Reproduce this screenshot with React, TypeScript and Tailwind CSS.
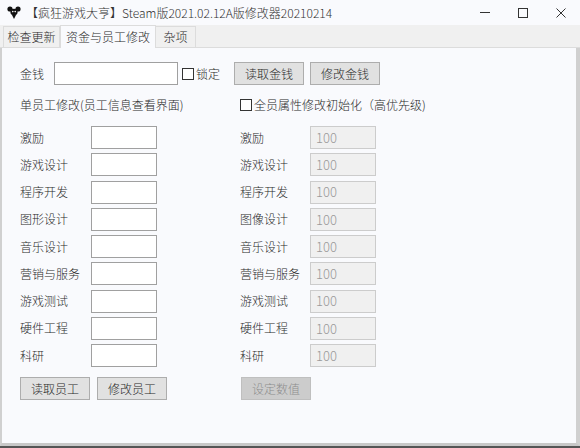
import React from "react";

const font = { fontFamily: '"Noto Sans CJK SC", "Microsoft YaHei", sans-serif' };

const skills = ["激励", "游戏设计", "程序开发", "图形设计", "音乐设计", "营销与服务", "游戏测试", "硬件工程", "科研"];
const skillsRight = ["激励", "游戏设计", "程序开发", "图像设计", "音乐设计", "营销与服务", "游戏测试", "硬件工程", "科研"];

function Btn({ children, disabled }: { children: React.ReactNode; disabled?: boolean }) {
  return (
    <button
      className={
        disabled
          ? "flex h-[23px] w-[70px] items-center justify-center border border-[#bfbfbf] bg-[#cccccc] text-[12px] text-[#8d8d8d]"
          : "flex h-[23px] w-[70px] items-center justify-center border border-[#adadad] bg-[#e1e1e1] text-[12px] text-[#2a2a2a]"
      }
    >
      {children}
    </button>
  );
}

function Check() {
  return <span className="inline-block h-[12px] w-[12px] border border-[#333] bg-white" />;
}

function AppIcon() {
  return (
    <svg width="14" height="13" viewBox="0 0 14 13">
      <circle cx="3" cy="3" r="2.6" fill="#111" />
      <circle cx="11" cy="3" r="2.6" fill="#111" />
      <ellipse cx="7" cy="6" rx="3.6" ry="3.2" fill="#111" />
      <path d="M5 9 L7 13 L9 9 Z" fill="#111" />
      <circle cx="5.8" cy="5.6" r="0.8" fill="#fff" />
      <circle cx="8.2" cy="5.6" r="0.8" fill="#fff" />
    </svg>
  );
}

export default function App() {
  return (
    <div className="flex h-[448px] w-[580px] flex-col overflow-hidden bg-[#f9fafd] font-light text-[#2a2a2a]" style={font}>
      {/* title bar */}
      <div className="flex h-[25px] shrink-0 items-center bg-[#f9fafd]">
        <div className="ml-[7px] mr-[5px] flex items-center">
          <AppIcon />
        </div>
        <span className="text-[12px] text-[#333]">【疯狂游戏大亨】Steam版2021.02.12A版修改器20210214</span>
        <div className="ml-auto flex h-full items-center">
          <div className="flex w-[38px] justify-center">
            <span className="block h-px w-[10px] bg-[#333]" />
          </div>
          <div className="flex w-[38px] justify-center">
            <span className="block h-[10px] w-[10px] border border-[#333]" />
          </div>
          <div className="flex w-[38px] justify-center">
            <svg width="10" height="10" viewBox="0 0 10 10">
              <path d="M0.5 0.5 L9.5 9.5 M9.5 0.5 L0.5 9.5" stroke="#333" strokeWidth="1" />
            </svg>
          </div>
        </div>
      </div>

      {/* tabs */}
      <div className="flex h-[23px] shrink-0 items-end border-b border-[#dcdcdc] bg-[#f0f0f0] pl-[3px]">
        <div className="flex h-[21px] w-[57px] items-center justify-center border border-b-0 border-[#dcdcdc] text-[12px]">检查更新</div>
        <div className="relative top-px flex h-[23px] w-[96px] items-center justify-center border border-b-0 border-[#dcdcdc] bg-[#f9fafd] text-[12px]">
          资金与员工修改
        </div>
        <div className="flex h-[21px] w-[40px] items-center justify-center border border-b-0 border-l-0 border-[#dcdcdc] text-[12px]">杂项</div>
      </div>

      {/* content */}
      <div className="flex flex-1 flex-col border-b-[3px] border-l-[2px] border-r-[4px] border-b-[#c8c8c8] border-l-[#d0d0d0] border-r-[#d0d0d0] pl-[18px] pt-[14px]">
        <div className="flex h-[23px] items-center text-[12px]">
          <span className="w-[34px]">金钱</span>
          <input className="h-[23px] w-[124px] border border-[#a0a0a0] bg-white outline-none" />
          <span className="ml-[4px] flex items-center gap-[2px]">
            <Check />
            <span>锁定</span>
          </span>
          <div className="ml-[14px] flex gap-[6px]">
            <Btn>读取金钱</Btn>
            <Btn>修改金钱</Btn>
          </div>
        </div>

        <div className="mt-[11px] flex h-[18px] items-center text-[12px]">
          <span className="w-[220px]">单员工修改(员工信息查看界面)</span>
          <span className="flex items-center gap-[2px]">
            <Check />
            <span>全员属性修改初始化（高优先级)</span>
          </span>
        </div>

        <div className="mt-[12px] grid grid-cols-[220px_1fr] gap-y-[4.25px] text-[12px]">
          {skills.map((s, i) => (
            <React.Fragment key={s}>
              <div className="flex h-[23px] items-center">
                <span className="w-[71px]">{s}</span>
                <input className="h-[23px] w-[66px] border border-[#a0a0a0] bg-white outline-none" />
              </div>
              <div className="flex h-[23px] items-center">
                <span className="w-[70px]">{skillsRight[i]}</span>
                <div className="flex h-[23px] w-[66px] items-center border border-[#cccccc] bg-[#f0f0f0] pl-[5px] text-[13px] text-[#9a9a9a]">
                  100
                </div>
              </div>
            </React.Fragment>
          ))}
        </div>

        <div className="mt-[10px] flex text-[12px]">
          <div className="flex gap-[7px]">
            <Btn>读取员工</Btn>
            <Btn>修改员工</Btn>
          </div>
          <div className="ml-[74px]">
            <Btn disabled>设定数值</Btn>
          </div>
        </div>
      </div>
      <div className="h-[2px] shrink-0 bg-[#555]" />
    </div>
  );
}
